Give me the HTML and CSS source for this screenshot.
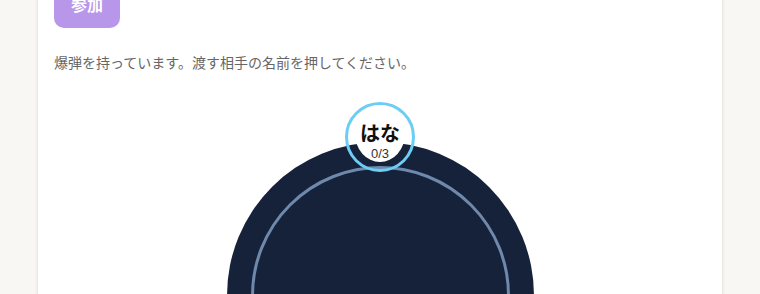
FILE: index.html
```html
<!DOCTYPE html>
<html lang="ja">
<head>
  <meta charset="UTF-8">
  <meta name="viewport" content="width=device-width, initial-scale=1">
  <title>爆弾ゲーム</title>
  <link rel="stylesheet" href="styles.css">
</head>
<body>
  <main class="card">
    <button class="btn-join">参加</button>

    <p class="hint">爆弾を持っています。渡す相手の名前を押してください。</p>

    <section class="arena">
      <div class="table">
        <div class="table-ring"></div>
      </div>
      <!-- プレイヤーは円周上に並ぶ -->
      <button class="player" style="left: 165px; top: 7px;">
        <span class="player-label">
          <span class="player-name">はな</span>
          <span class="player-count">0/3</span>
        </span>
      </button>
    </section>
  </main>
</body>
</html>
```

FILE: styles.css
```css
:root {
  --bg: #f8f7f3;
  --card: #ffffff;
  --text: #666666;
  --primary: #b896e9;
  --table: #16213a;
  --ring: #6e89ab;
  --player: #6ccdf5;
}

body {
  background-color: var(--bg);
  color: var(--text);
  font-family: "Noto Sans CJK JP", "Noto Sans", sans-serif;
  margin: 0;
  padding: 0;
  overflow: hidden;
}

.card {
  background-color: var(--card);
  margin: -37px 37px 0;
  padding: 16px;
  border: 1px solid #ebe9e4;
  box-shadow: 0 1px 4px rgba(0, 0, 0, 0.06);
  min-height: 400px;
}

.btn-join {
  height: 48px;
  padding: 0 17px;
  border: none;
  border-radius: 10px;
  background-color: var(--primary);
  color: white;
  font-family: inherit;
  font-size: 16px;
  font-weight: bold;
  cursor: pointer;
}

.hint {
  margin: 24px 0 0;
  font-size: 14px;
  line-height: 20px;
}

.arena {
  position: relative;
  width: 400px;
  height: 400px;
  margin: 23px auto 0;
}

.table {
  position: absolute;
  left: 46.5px;
  top: 46.5px;
  width: 307px;
  height: 307px;
  border-radius: 50%;
  background-color: var(--table);
}

.table-ring {
  position: absolute;
  inset: 24px;
  border: 3px solid var(--ring);
  border-radius: 50%;
}

.player {
  position: absolute;
  width: 70px;
  height: 70px;
  padding: 0;
  border: 3px solid var(--player);
  border-radius: 50%;
  background: transparent;
  display: flex;
  align-items: flex-start;
  justify-content: center;
  font-family: inherit;
  cursor: pointer;
}

.player-label {
  box-sizing: border-box;
  width: 50px;
  height: 57px;
  border-radius: 50%;
  display: flex;
  flex-direction: column;
  align-items: center;
  background-color: white;
  padding-top: 14px;
}

.player-name {
  color: #111111;
  font-size: 20px;
  font-weight: bold;
  line-height: 27px;
}

.player-count {
  color: #333333;
  font-family: "Liberation Sans", Arial, sans-serif;
  font-size: 13px;
  line-height: 16px;
}
```
